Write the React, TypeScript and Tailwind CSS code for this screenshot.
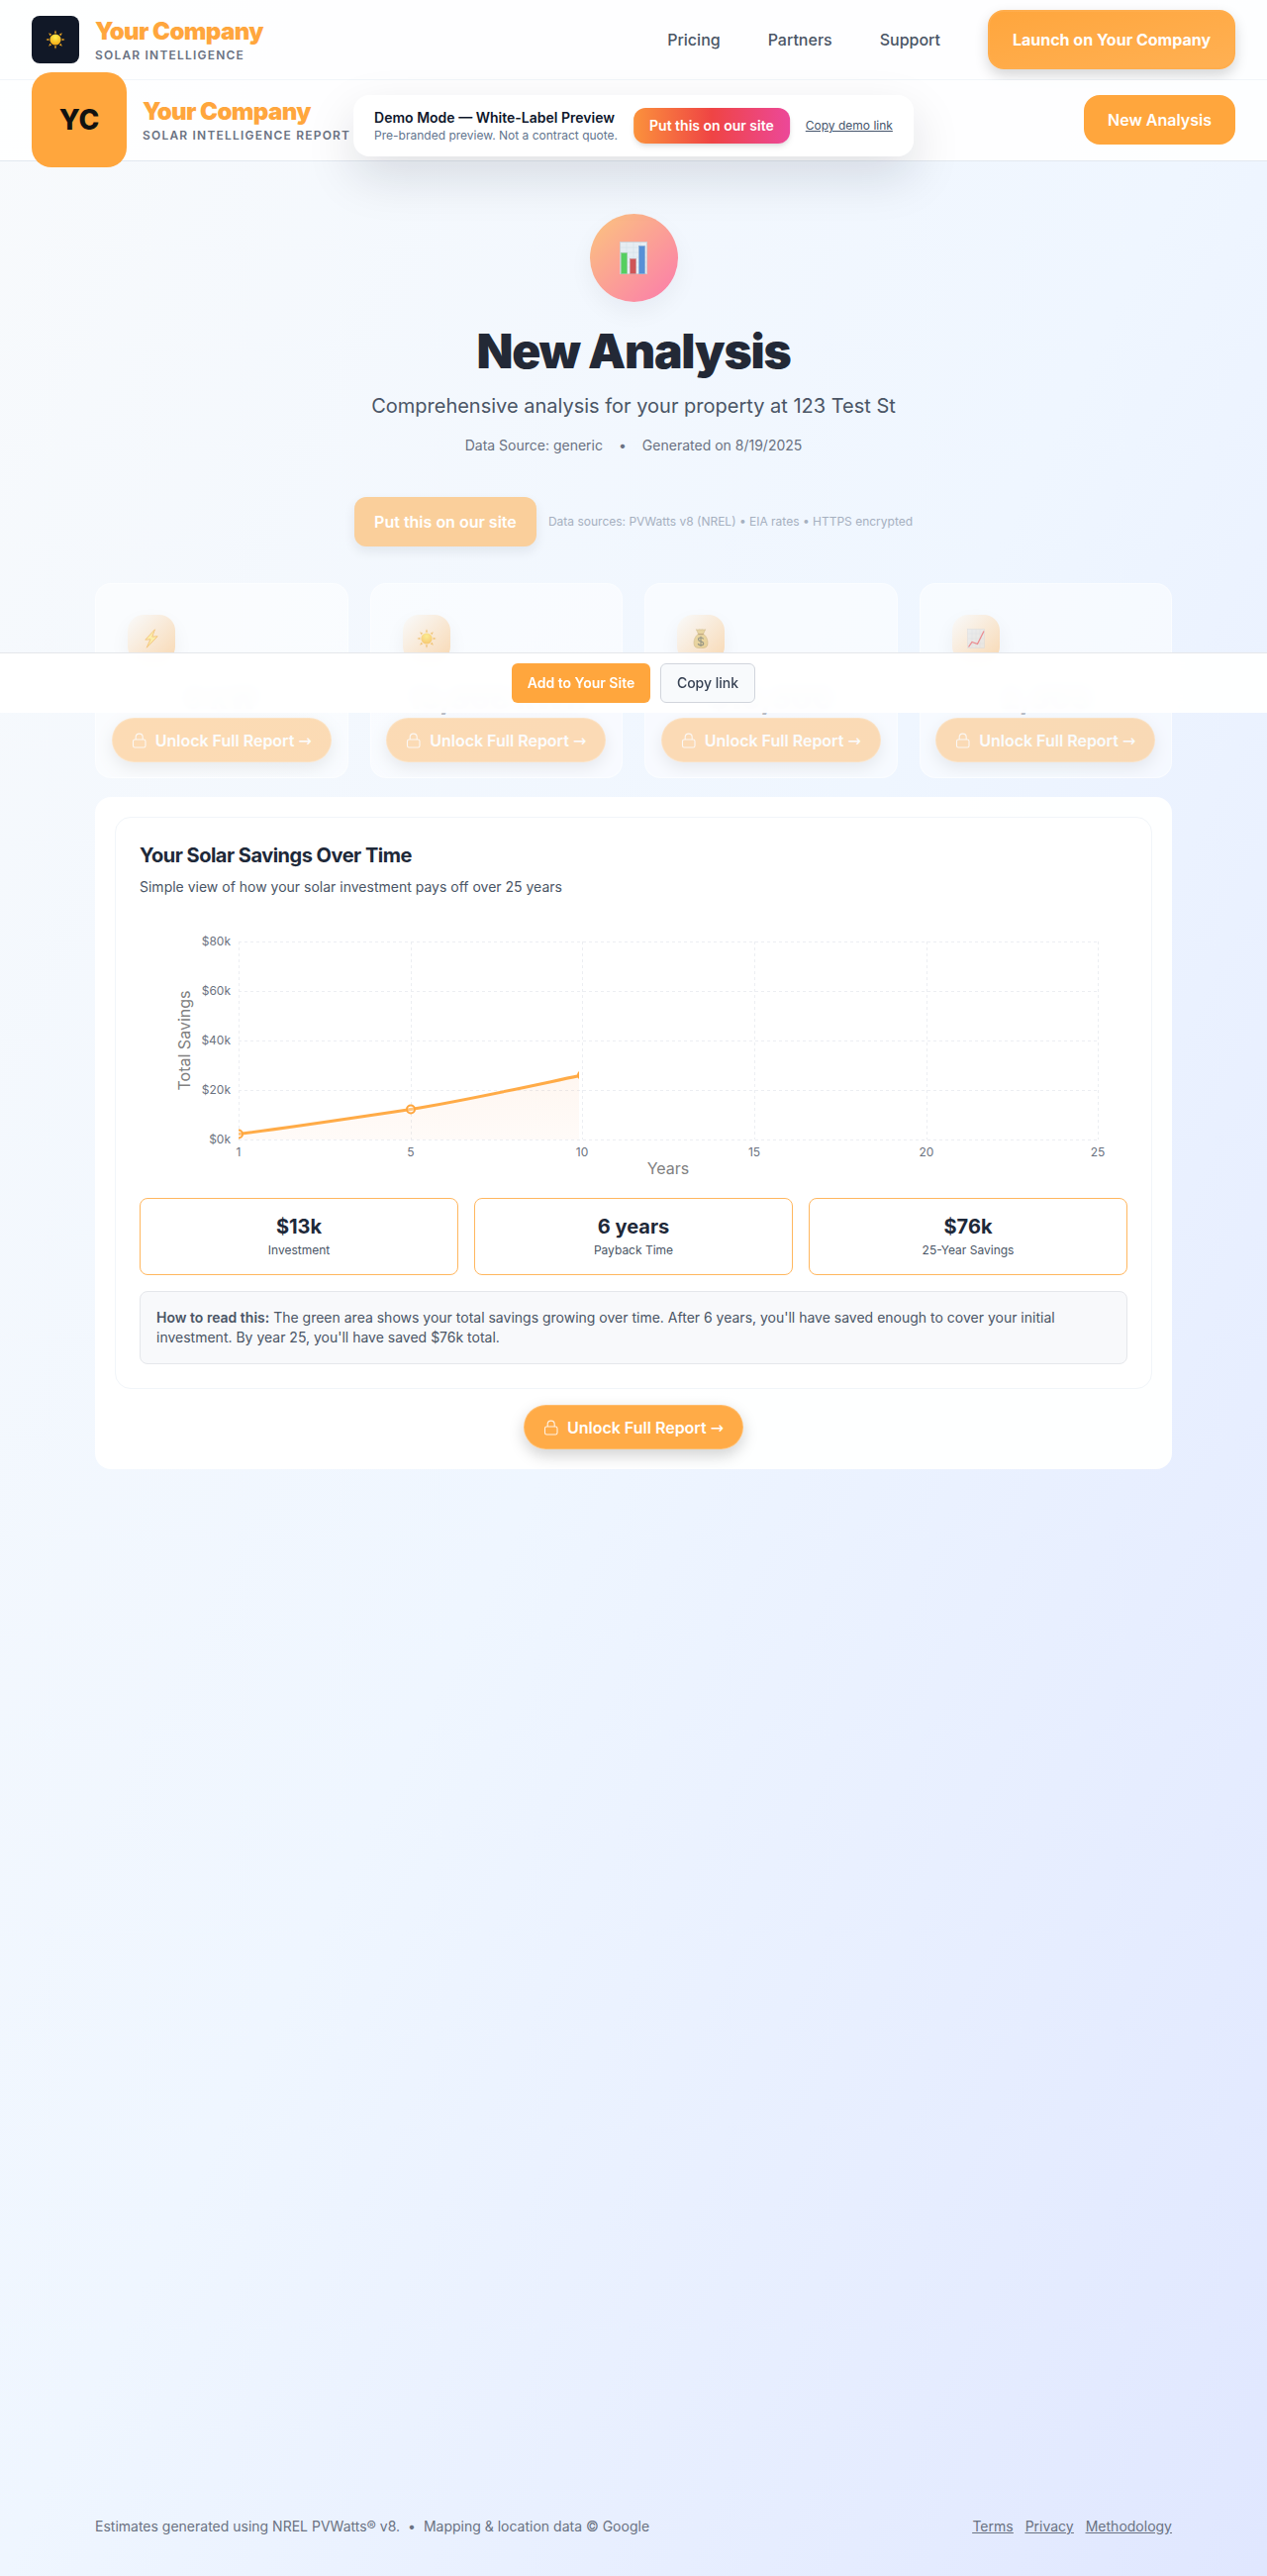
import React from "react";

function Sun({ size }: { size: number }) {
  return (
    <svg width={size} height={size} viewBox="0 0 20 20" aria-hidden="true">
      <defs>
        <radialGradient id="sun" cx="0.5" cy="0.3" r="0.7">
          <stop offset="0" stopColor="#fff04f" />
          <stop offset="1" stopColor="#f5a914" />
        </radialGradient>
      </defs>
      {[0, 45, 90, 135, 180, 225, 270, 315].map((a) => (
        <path key={a} d="M10 0.3L11.2 3.4H8.8Z" fill="#eba321" transform={`rotate(${a} 10 10)`} />
      ))}
      <circle cx="10" cy="10" r="5.6" fill="url(#sun)" />
    </svg>
  );
}

function BarChart() {
  return (
    <svg width="32" height="36" viewBox="0 0 32 36" aria-hidden="true">
      <rect x="2.500" y="1.500" width="27" height="32" fill="#e6edf3" stroke="#d3cfd2" />
      <path d="M3 7H29M3 12H29M3 17H29M3 22H29M3 27H29M9 2V33M16 2V33M23 2V33" stroke="#d5e0ea" strokeWidth="0.6" />
      <rect x="3.500" y="12.500" width="6" height="21" fill="#55cf60" stroke="#8fc79a" strokeWidth=".6" />
      <rect x="12.500" y="18.500" width="6" height="15" fill="#cf5557" stroke="#c98a90" strokeWidth=".6" />
      <rect x="21.500" y="5.500" width="6" height="28" fill="#5690d6" stroke="#86a9d2" strokeWidth=".6" />
    </svg>
  );
}

function Bolt() {
  return (
    <svg width="20" height="20" viewBox="0 0 20 20" aria-hidden="true">
      <path d="M13.500 .8L3.800 11.200L9 10.800L5.200 19.200L16.200 7.800L10.800 8.100Z" fill="#fff27a" stroke="#f0a52e" strokeWidth="1" />
    </svg>
  );
}

function MoneyBag() {
  return (
    <svg width="20" height="20" viewBox="0 0 20 20" aria-hidden="true">
      <path d="M7.5 5.2L5.4.8C7.5 1.8 8 .2 10 1.2C12 .2 12.5 1.8 14.6.8L12.5 5.2C16 8 17.4 12 16.8 16C16.4 19 14 19.6 10 19.6S3.600 19 3.200 16C2.600 12 4 8 7.500 5.200Z" fill="#d9c069" stroke="#a78a3d" strokeWidth=".6" />
      <path d="M7.2 5.6H12.8" stroke="#8a6a2d" strokeWidth="1.2" />
      <path d="M12.600 10.500C12.200 9.300 11.200 9 10 9C8.500 9 7.500 9.700 7.500 10.900C7.500 13.600 12.700 12.100 12.700 14.900C12.700 16.200 11.500 16.800 10 16.800C8.500 16.800 7.500 16.200 7.200 15M10 7.800V18" fill="none" stroke="#3c4a3a" strokeWidth="1.2" />
    </svg>
  );
}

function Trend() {
  return (
    <svg width="20" height="20" viewBox="0 0 20 20" aria-hidden="true">
      <rect x="1.500" y=".5" width="17" height="19" fill="#dce9f6" stroke="#c6d2de" strokeWidth=".6" />
      <path d="M2 5H18M2 10H18M2 15H18M6 1V19M10 1V19M14 1V19" stroke="#c5d7e8" strokeWidth=".5" />
      <path d="M2.500 18.500L6 13.500L11.500 15.500L18 2.500" fill="none" stroke="#e0304a" strokeWidth="1.300" />
    </svg>
  );
}

function Lock() {
  return (
    <svg width="16" height="16" viewBox="0 0 16 16" fill="none" stroke="currentColor" strokeWidth="1.1" opacity=".85" aria-hidden="true">
      <rect x="1.500" y="7" width="12.500" height="8" rx="1.800" />
      <path d="M4.200 7V4.600A3.500 3.500 0 0 1 11.200 4.600V7" />
    </svg>
  );
}

function UnlockButton() {
  return (
    <button className="flex h-[45px] w-[222px] shrink-0 items-center justify-center gap-2 rounded-full border border-white/20 bg-[#ffa63d]/95 text-base font-semibold whitespace-nowrap text-white shadow-[0_6px_16px_rgba(0,0,0,0.18)]">
      <Lock />
      <span>
        Unlock Full Report <span className="font-['DejaVu_Sans',sans-serif] leading-none font-normal">→</span>
      </span>
    </button>
  );
}

const metrics = [
  { icon: <Bolt />, value: "9 kW" },
  { icon: <Sun size={20} />, value: "13,868 kWh" },
  { icon: <MoneyBag />, value: "$19,600" },
  { icon: <Trend />, value: "2,303" },
];

const stats = [
  { value: "$13k", label: "Investment" },
  { value: "6 years", label: "Payback Time" },
  { value: "$76k", label: "25-Year Savings" },
];

function SavingsChart() {
  const xs = [100, 274, 447, 621, 795, 968];
  const xl = ["1", "5", "10", "15", "20", "25"];
  const ys = [20, 70, 120, 170, 220];
  const yl = ["$80k", "$60k", "$40k", "$20k", "$0k"];
  return (
    <svg viewBox="0 0 998 271" className="block w-full" role="img" aria-label="Total savings by year">
      <defs>
        <linearGradient id="area" x1="0" y1="0" x2="0" y2="1">
          <stop offset="0" stopColor="#f97316" stopOpacity=".06" />
          <stop offset="1" stopColor="#f97316" stopOpacity=".03" />
        </linearGradient>
        <clipPath id="reveal">
          <rect x="100" y="0" width="344" height="240" />
        </clipPath>
      </defs>
      <g stroke="#eceef2" strokeDasharray="3 3">
        {ys.map((y) => <path key={y} d={`M100 ${y}.500H968`} />)}
        {xs.map((x) => <path key={x} d={`M${x}.500 20V220`} />)}
      </g>
      <g clipPath="url(#reveal)">
        <path d="M100 214.500C158 207 216 198 274 189.500C332 180 390 167 447 155V220H100Z" fill="url(#area)" />
        <path d="M100 214.500C158 207 216 198 274 189.500C332 180 390 167 447 155" fill="none" stroke="#ffa63d" strokeOpacity=".95" strokeWidth="3" />
        {[[100, 214.5], [274, 189.5], [447, 155]].map(([x, y]) => (
          <circle key={x} cx={x} cy={y} r="4" fill="#fff" fillOpacity=".3" stroke="#ffa63d" strokeWidth="2" />
        ))}
      </g>
      <g fill="#6b7280" fontSize="12">
        {ys.map((y, i) => <text key={y} x="92" y={y + 4} textAnchor="end">{yl[i]}</text>)}
        {xs.map((x, i) => <text key={x} x={x} y="237" textAnchor="middle">{xl[i]}</text>)}
      </g>
      <g fill="#808080" fontSize="16" textAnchor="middle">
        <text x="534" y="255">Years</text>
        <text transform="translate(51 120) rotate(-90)">Total Savings</text>
      </g>
    </svg>
  );
}

export default function App() {
  return (
    <div className="relative flex min-h-screen flex-col bg-linear-to-br from-[#f8fafc] via-[#eff6ff] to-[#e0e7ff] font-['Inter',sans-serif] text-gray-800">
      <header className="flex h-[81px] items-center justify-between border-b border-slate-100 bg-white/90 px-8">
        <div className="flex items-center gap-4">
          <div className="flex size-12 items-center justify-center rounded-lg bg-[#111827]">
            <Sun size={20} />
          </div>
          <div>
            <div className="text-2xl leading-8 font-black tracking-tight text-[#ffa63d]">Your Company</div>
            <div className="text-xs font-semibold tracking-widest text-gray-500">SOLAR INTELLIGENCE</div>
          </div>
        </div>
        <nav className="flex items-center gap-12 font-medium text-gray-600">
          <a href="#pricing">Pricing</a>
          <a href="#partners">Partners</a>
          <a href="#support">Support</a>
          <button className="h-[60px] w-[250px] rounded-2xl border-2 border-[#ffad4d] bg-linear-to-br from-[#ffa63d] to-[#ffb052] font-bold text-white shadow-[0_6px_14px_rgba(0,0,0,0.16)]">Launch on Your Company</button>
        </nav>
      </header>

      <div className="flex h-[82px] items-center justify-between border-b border-slate-200 bg-white/90 px-8 pb-px">
        <div className="flex items-center gap-4">
          <div className="-my-2 flex size-24 items-center justify-center rounded-[20px] bg-[#ffa63d] text-[28px] font-extrabold text-[#111111]">YC</div>
          <div>
            <div className="text-2xl leading-8 font-black tracking-tight text-[#ffa63d]">Your Company</div>
            <div className="text-xs font-semibold tracking-widest text-gray-500">SOLAR INTELLIGENCE REPORT</div>
          </div>
        </div>
        <button className="h-[50px] w-[153px] rounded-2xl bg-[#ffa63d] font-semibold text-white">New Analysis</button>
      </div>

      <aside className="absolute top-24 left-1/2 z-20 flex h-[62px] w-max -translate-x-1/2 items-center gap-4 rounded-2xl bg-white px-[21px] shadow-[0_20px_50px_rgba(15,23,42,0.13)]">
        <div>
          <div className="text-sm leading-5 font-semibold text-slate-900">Demo Mode — White-Label Preview</div>
          <div className="text-xs text-slate-500">Pre-branded preview. Not a contract quote.</div>
        </div>
        <button className="h-9 rounded-xl bg-[linear-gradient(90deg,#fb923c,#ef4444,#ec4899)] px-4 text-sm font-semibold text-white shadow-md">Put this on our site</button>
        <button className="text-xs text-slate-600 underline">Copy demo link</button>
      </aside>

      <main className="mx-auto w-full max-w-[1152px] px-8 pt-[53px]">
        <section className="flex flex-col items-center text-center">
          <div className="flex size-[89px] items-center justify-center rounded-full bg-[linear-gradient(135deg,#fbc57e,#fb7bac)] shadow-[0_10px_24px_rgba(15,23,42,0.05)]">
            <BarChart />
          </div>
          <h1 className="mt-[22px] text-5xl leading-[56px] font-black tracking-tight text-[#232936]">New Analysis</h1>
          <p className="mt-[13px] text-xl leading-7 text-gray-600">Comprehensive analysis for your property at 123 Test St</p>
          <p className="mt-4 flex gap-4 text-sm leading-5 text-gray-500">
            <span>Data Source: generic</span><span>•</span><span>Generated on 8/19/2025</span>
          </p>
          <div className="mt-[42px] flex items-center gap-3">
            <button className="h-[50px] w-[184px] rounded-xl bg-[#facf9b] font-semibold text-white shadow-[0_5px_12px_rgba(15,23,42,0.08)]">Put this on our site</button>
            <span className="text-xs text-[#a6b0c0]">Data sources: PVWatts v8 (NREL) • EIA rates • HTTPS encrypted</span>
          </div>
        </section>

        <section className="mt-[37px] grid grid-cols-4 gap-[22px]">
          {metrics.map((m) => (
            <article key={m.value} className="flex h-[197px] flex-col overflow-hidden rounded-2xl border border-white/50 bg-white/50 px-4">
              <div className="mt-[31px] ml-4 flex size-12 shrink-0 items-center justify-center rounded-2xl bg-[linear-gradient(135deg,#f9fafb,#f8d8b2)] shadow-[0_8px_20px_rgba(15,23,42,0.05)]">
                <span className="opacity-50">{m.icon}</span>
              </div>
              <div className="mt-4 text-center text-3xl leading-10 font-black whitespace-nowrap text-slate-800/30">{m.value}</div>
              <div className="flex justify-center opacity-40"><UnlockButton /></div>
            </article>
          ))}
        </section>

        <section className="mt-[19px] rounded-2xl bg-white/95 p-5">
          <div className="rounded-2xl border border-slate-100 bg-white/50 p-6">
            <h2 className="text-xl leading-7 font-bold tracking-tight text-gray-800">Your Solar Savings Over Time</h2>
            <p className="mt-2 mb-[25px] text-sm leading-5 text-gray-600">Simple view of how your solar investment pays off over 25 years</p>
            <SavingsChart />
            <div className="mt-2 grid grid-cols-3 gap-4">
              {stats.map((s) => (
                <div key={s.label} className="flex h-[78px] flex-col items-center justify-center rounded-lg border border-[#ffb75f]">
                  <div className="text-xl leading-6 font-bold text-gray-800">{s.value}</div>
                  <div className="mt-1 text-xs text-gray-600">{s.label}</div>
                </div>
              ))}
            </div>
            <p className="mt-4 rounded-lg border border-gray-200 bg-[#f8f9fb] p-4 text-sm leading-5 text-gray-600">
              <strong className="font-semibold">How to read this:</strong> The green area shows your total savings growing over time. After 6 years, you'll have saved enough to cover your initial investment. By year 25, you'll have saved $76k total.
            </p>
          </div>
          <div className="mt-4 flex justify-center"><UnlockButton /></div>
        </section>
      </main>

      <footer className="mx-auto mt-auto flex w-full max-w-[1152px] items-center justify-between px-8 pb-10 text-sm leading-5 text-gray-500">
        <p className="flex gap-2"><span>Estimates generated using NREL PVWatts® v8.</span><span>•</span><span>Mapping &amp; location data © Google</span></p>
        <nav className="flex gap-3 underline">
          <a href="#terms">Terms</a><a href="#privacy">Privacy</a><a href="#methodology">Methodology</a>
        </nav>
      </footer>

      <div className="absolute inset-x-0 top-[659px] z-30 flex h-[61px] items-center justify-center gap-2.5 border-t border-gray-200 bg-white/95 backdrop-blur-sm">
        <button className="h-10 w-[140px] rounded-md bg-[#ffa63d] text-sm font-semibold text-white">Add to Your Site</button>
        <button className="h-10 w-24 rounded-md border border-gray-300 bg-slate-50 text-sm font-medium text-gray-700">Copy link</button>
      </div>
    </div>
  );
}
